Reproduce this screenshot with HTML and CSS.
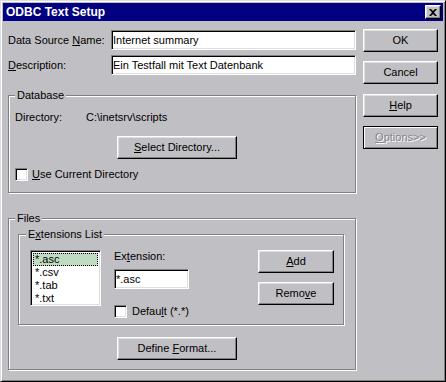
FILE: index.html
```html
<!DOCTYPE html>
<html lang="en">
<head>
    <meta charset="UTF-8">
    <title>ODBC Text Setup</title>
    <link rel="stylesheet" href="styles.css">
</head>
<body>
    <div class="window">
        <div class="titlebar">
            <span class="title">ODBC Text Setup</span>
            <button type="button" class="close" aria-label="Close">
                <svg width="8" height="7" viewBox="0 0 8 7">
                    <path d="M0 0h2l2 2 2-2h2L5 3.5 8 7H6L4 5 2 7H0l3-3.5z" fill="#000"/>
                </svg>
            </button>
        </div>
        <div class="content">
            <div class="main">
                <div class="field-row">
                    <label for="dsn">Data Source <u>N</u>ame:</label>
                    <input type="text" id="dsn" class="edit" value="Internet summary">
                </div>
                <div class="field-row">
                    <label for="desc"><u>D</u>escription:</label>
                    <input type="text" id="desc" class="edit" value="Ein Testfall mit Text Datenbank">
                </div>

                <fieldset class="group database">
                    <legend>Database</legend>
                    <div class="dir-row">
                        <span class="dir-label">Directory:</span>
                        <span>C:\inetsrv\scripts</span>
                    </div>
                    <button type="button" class="btn wide-btn select-dir"><u>S</u>elect Directory...</button>
                    <div class="check-row">
                        <input type="checkbox" id="useCurrent" class="check">
                        <label for="useCurrent"><u>U</u>se Current Directory</label>
                    </div>
                </fieldset>

                <fieldset class="group files">
                    <legend>Files</legend>
                    <fieldset class="group extensions">
                        <legend>E<u>x</u>tensions List</legend>
                        <div class="ext-row">
                            <ul class="listbox">
                                <li class="selected">*.asc</li>
                                <li>*.csv</li>
                                <li>*.tab</li>
                                <li>*.txt</li>
                            </ul>
                            <div class="ext-col">
                                <label for="ext">Ex<u>t</u>ension:</label>
                                <input type="text" id="ext" class="edit ext-edit" value="*.asc">
                                <div class="check-row default-row">
                                    <input type="checkbox" id="defaultExt" class="check">
                                    <label for="defaultExt">Defau<u>l</u>t (*.*)</label>
                                </div>
                            </div>
                            <div class="ext-buttons">
                                <button type="button" class="btn"><u>A</u>dd</button>
                                <button type="button" class="btn">Remo<u>v</u>e</button>
                            </div>
                        </div>
                    </fieldset>
                    <button type="button" class="btn wide-btn define-format">Define <u>F</u>ormat...</button>
                </fieldset>
            </div>

            <div class="side">
                <button type="button" class="btn">OK</button>
                <button type="button" class="btn">Cancel</button>
                <button type="button" class="btn"><u>H</u>elp</button>
                <button type="button" class="btn options" disabled><u>O</u>ptions&gt;&gt;</button>
            </div>
        </div>
    </div>
</body>
</html>
```

FILE: styles.css
```css
/* Win98 style dialog */
body {
    margin: 0;
    background-color: #c0bfc4;
    font-family: 'Liberation Sans', Arial, sans-serif;
    font-size: 11px;
    line-height: 13px;
    color: #000;
}
.window {
    width: 446px;
    height: 382px;
    box-sizing: border-box;
    padding: 2px;
    border: 1px solid;
    border-color: #dfdfdf #000 #000 #dfdfdf;
    box-shadow: inset 1px 1px #fff, inset -1px -1px #808080;
    background-color: #c0bfc4;
}
.titlebar {
    height: 18px;
    display: flex;
    align-items: center;
    justify-content: space-between;
    padding: 0 2px 0 3px;
    background-color: #000080;
}
.title {
    color: #fff;
    font-weight: bold;
    font-size: 12px;
}
.close {
    width: 16px;
    height: 14px;
    padding: 0;
    display: flex;
    align-items: center;
    justify-content: center;
    background-color: #c0bfc4;
    border: 1px solid;
    border-color: #fff #000 #000 #fff;
    box-shadow: inset -1px -1px #808080, inset 1px 1px #dfdfdf;
}
.content {
    display: flex;
    gap: 7px;
    padding: 8px 0 0 5px;
}
.main {
    width: 348px;
    padding-top: 1px;
}
.side {
    width: 75px;
    display: flex;
    flex-direction: column;
}
.side .btn + .btn {
    margin-top: 9px;
}
.side .btn:nth-child(3) {
    margin-top: 10px;
}
.side .options {
    margin-top: 55px;
}

u {
    text-decoration: underline;
}
label {
    display: block;
}

.field-row {
    display: flex;
    align-items: center;
    height: 20px;
}
.field-row + .field-row {
    margin-top: 5px;
}
.field-row label {
    width: 103px;
}
.edit {
    box-sizing: border-box;
    width: 245px;
    height: 20px;
    margin: 0;
    padding: 0 1px;
    border: 1px solid;
    border-color: #808080 #fff #fff #808080;
    box-shadow: inset 1px 1px #000, inset -1px -1px #dfdfdf;
    background: #fff;
    font: inherit;
    color: #000;
    outline: none;
}

.btn {
    box-sizing: border-box;
    height: 23px;
    padding: 0;
    border: 1px solid;
    border-color: #fff #000 #000 #fff;
    box-shadow: inset -1px -1px #808080, inset 1px 1px #dfdfdf;
    background-color: #c0bfc4;
    font: inherit;
    color: #000;
}
.btn:disabled {
    color: #868589;
    text-shadow: 1px 1px #fff;
}
.options {
    border-color: #000;
    box-shadow: inset 1px 1px #fff, inset -1px -1px #808080;
}
.wide-btn {
    width: 120px;
    margin-left: 102px;
}

.group {
    margin: 0;
    min-width: 0;
    border: 1px solid #808080;
    box-shadow: inset 1px 1px #fff, 1px 1px #fff;
}
.group legend {
    padding: 0 2px;
    line-height: 13px;
    background-color: #c0bfc4;
}
.database {
    margin-top: 14px;
    padding: 9px 6px 11px 6px;
}
.dir-row {
    display: flex;
}
.dir-label {
    width: 71px;
}
.select-dir {
    display: block;
    margin-top: 12px;
}
.check-row {
    display: flex;
    align-items: center;
    height: 13px;
    margin-top: 9px;
}
.check {
    appearance: none;
    box-sizing: border-box;
    width: 13px;
    height: 13px;
    margin: 0 4px 0 0;
    border: 1px solid;
    border-color: #808080 #fff #fff #808080;
    box-shadow: inset 1px 1px #000, inset -1px -1px #dfdfdf;
    background: #fff;
}

.files {
    margin-top: 19px;
    padding: 3px 6px 9px 6px;
}
.extensions {
    width: 326px;
    box-sizing: border-box;
    margin-left: 3px;
    padding: 9px 7px 6px 7px;
}
.ext-row {
    display: flex;
    align-items: flex-start;
}
.listbox {
    box-sizing: border-box;
    width: 71px;
    height: 56px;
    margin: 0 0 0 4px;
    padding: 2px;
    list-style: none;
    overflow: hidden;
    border: 1px solid;
    border-color: #808080 #fff #fff #808080;
    box-shadow: inset 1px 1px #000, inset -1px -1px #dfdfdf;
    background: #fff;
}
.listbox li {
    height: 13px;
    padding-left: 1px;
    border: 1px solid transparent;
    line-height: 11px;
    box-sizing: border-box;
}
.listbox .selected {
    background-color: #c0dcc0;
    border: 1px dotted #000;
}
.ext-col {
    width: 144px;
    margin-left: 13px;
}
.ext-edit {
    display: block;
    width: 75px;
    margin-top: 6px;
}
.default-row {
    margin-top: 16px;
}
.default-row .check {
    margin-right: 5px;
}
.ext-buttons {
    display: flex;
    flex-direction: column;
    gap: 9px;
}
.ext-buttons .btn {
    width: 76px;
}
.define-format {
    display: block;
    margin-top: 12px;
}
```
